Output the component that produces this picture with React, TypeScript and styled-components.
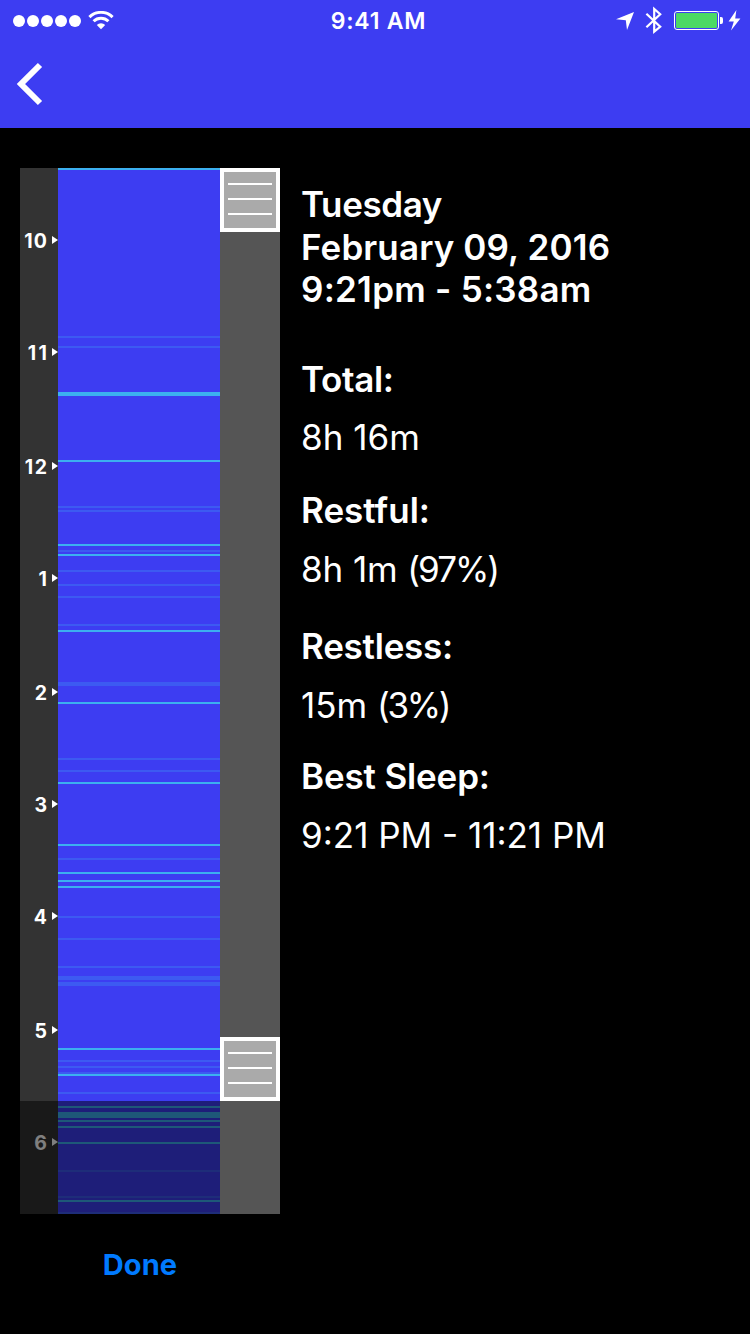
import React from "react";
import styled, { createGlobalStyle } from "styled-components";

const blue = "#3d3df2";
const bright = "#3cb0f0";
const dim = "#3d5af2";

const GlobalStyle = createGlobalStyle`
  *, *::before, *::after { box-sizing: border-box; }
  html, body { margin: 0; background: #000; }
  body {
    font-family: Inter, "Liberation Sans", sans-serif;
    color: #fff;
    overflow: hidden;
    -webkit-font-smoothing: antialiased;
  }
`;

const Screen = styled.div`
  width: 750px;
  height: 1334px;
  display: flex;
  flex-direction: column;
  background: #000;
`;

const Header = styled.header`
  height: 128px;
  background: ${blue};
  display: flex;
  flex-direction: column;
`;

const StatusBar = styled.div`
  height: 40px;
  display: grid;
  grid-template-columns: 1fr auto 1fr;
  align-items: center;
`;

const StatusLeft = styled.div`
  display: flex;
  align-items: center;
  gap: 7px;
  padding: 1px 0 0 13px;
`;

const Signal = styled.div`
  display: flex;
  gap: 2px;
`;

const Dot = styled.span`
  width: 12px;
  height: 12px;
  border-radius: 50%;
  background: #fff;
`;

const Clock = styled.time`
  font-size: 23px;
  line-height: 38px;
  font-weight: 600;
  letter-spacing: 0.8px;
  padding: 2px 0 0 7px;
`;

const StatusRight = styled.div`
  display: flex;
  justify-content: flex-end;
  padding-right: 8px;
`;

const NavBar = styled.nav`
  flex: 1;
  padding: 22px 0 0 16px;
`;

const BackButton = styled.button`
  display: block;
  padding: 0;
  border: 0;
  background: none;
  color: #fff;
  svg { display: block; }
`;

const Content = styled.main`
  display: flex;
  gap: 21px;
  padding: 40px 20px 0;
`;

const Timeline = styled.section`
  width: 260px;
  display: flex;
  flex-direction: column;
`;

const Track = styled.div`
  height: 1046px;
  display: flex;
`;

const Recording = styled.div`
  position: relative;
  width: 200px;
  display: flex;
`;

const HourScale = styled.div`
  width: 38px;
  background: #333;
  padding-top: 60px;
`;

const Hour = styled.div<{ $height: number; $tracking: number }>`
  height: ${(p) => p.$height}px;
  display: flex;
  align-items: flex-start;
  justify-content: flex-end;
  gap: ${(p) => 5 - p.$tracking}px;
  font-size: 19.5px;
  line-height: 26px;
  font-weight: 700;
  letter-spacing: ${(p) => p.$tracking}px;
  svg { display: block; margin-top: 8px; }
`;

const Trimmed = styled.div`
  position: absolute;
  inset: 933px 0 0;
  background: rgba(0, 0, 0, 0.5);
`;

const Slider = styled.div`
  width: 60px;
  background: #555;
  display: flex;
  flex-direction: column;
  justify-content: space-between;
  padding-bottom: 113px;
`;

const Handle = styled.div`
  height: 64px;
  border: 4px solid #fff;
  background: #aaa;
  padding: 11px 4px 0;
  display: flex;
  flex-direction: column;
  gap: 13px;
`;

const Grip = styled.span`
  height: 2px;
  background: #fff;
`;

const DoneButton = styled.button`
  width: 240px;
  margin-top: 31px;
  padding: 0;
  border: 0;
  background: none;
  color: #007aff;
  font: 700 29px/40px Inter, "Liberation Sans", sans-serif;
  letter-spacing: 0.1px;
`;

const Details = styled.section`
  padding-top: 15px;
  font-size: 35px;
  white-space: nowrap;
`;

const Night = styled.h1`
  margin: 0 0 47.5px;
  font-size: inherit;
  font-weight: 600;
  line-height: 42.5px;
`;

const Line = styled.span<{ $tracking?: number }>`
  display: block;
  letter-spacing: ${(p) => p.$tracking ?? 0}px;
`;

const Share = styled.span<{ $tracking?: number }>`
  letter-spacing: ${(p) => p.$tracking ?? 0}px;
`;

const Stat = styled.div<{ $gap: number; $after: number }>`
  display: flex;
  flex-direction: column;
  gap: ${(p) => p.$gap}px;
  margin-bottom: ${(p) => p.$after}px;
`;

const StatName = styled.h2`
  margin: 0;
  font-size: inherit;
  font-weight: 600;
  line-height: 42px;
`;

const StatValue = styled.p`
  margin: 0;
  font-weight: 400;
  line-height: 42px;
`;

const hours: [string, number, number][] = [
  ["10", 112, 1.3], ["11", 114, 2.5], ["12", 112, 1.5], ["1", 114, 0], ["2", 112, 0],
  ["3", 112, 0], ["4", 114, 0], ["5", 112, 0], ["6", 26, 0],
];

// Offset from the top of the graph and thickness of each movement line.
const restless: [number, number][] = [
  [0, 2], [224, 4], [292, 2], [376, 2], [386, 2], [462, 2], [534, 2], [614, 2],
  [676, 2], [704, 2], [712, 2], [718, 2], [880, 2], [906, 2], [938, 2], [944, 6],
  [952, 2], [958, 2], [974, 2], [1032, 2],
];
const light: [number, number][] = [
  [168, 2], [178, 2], [338, 2], [342, 2], [382, 2], [402, 2], [416, 2], [428, 2],
  [456, 2], [514, 4], [590, 2], [602, 2], [690, 2], [748, 2], [770, 2], [798, 2],
  [808, 4], [814, 4], [892, 2], [898, 2], [904, 2], [924, 2], [1002, 2], [1028, 2],
  [1044, 2],
];

const stats = [
  { name: "Total:", value: "8h 16m", gap: 16, after: 31, nt: -0.35, vt: 0 },
  { name: "Restful:", value: "8h 1m ", share: "(97%)", st: -2, gap: 17, after: 35, nt: 0, vt: -0.1 },
  { name: "Restless:", value: "15m ", share: "(3%)", st: -2.3, gap: 17, after: 29, nt: -0.25, vt: 0 },
  { name: "Best Sleep:", value: "9:21 PM - 11:21 PM", gap: 17, after: 0, nt: -0.15, vt: 0 },
];

const WifiIcon = () => (
  <svg width="26" height="19" viewBox="0 0 26 19" fill="none" stroke="#fff">
    <path d="M1.4 6.1a16.6 16.6 0 0 1 23.2 0" strokeWidth="3" />
    <path d="M5.6 10.3a10.6 10.6 0 0 1 14.8 0" strokeWidth="3" />
    <path d="M13 18.2 8.8 14a6 6 0 0 1 8.4 0Z" fill="#fff" stroke="none" />
  </svg>
);

const StatusIcons = () => (
  <svg width="126" height="40" viewBox="616 0 126 40">
    <path d="M634 12 627 30 625.8 20.3 616 19.2Z" fill="#fff" />
    <path d="M646.4 13.8 660.2 26.8 654.2 31.6V9L660.2 14.2 646.4 27.2" fill="none" stroke="#fff" strokeWidth="2.2" />
    <rect x="674.5" y="11.5" width="44" height="18" rx="2.5" fill="none" stroke="#fff" />
    <rect x="676" y="13" width="41" height="15" rx="1" fill="#4cd964" />
    <path d="M720 17h1.2q1.8 0 1.8 2v3q0 2-1.8 2H720Z" fill="#fff" />
    <path d="M736.4 10 728.6 21.4h5.2L731 30.4 740.4 18.5h-5.2Z" fill="#fff" />
  </svg>
);

const SleepGraph = () => (
  <svg width="162" height="1046" viewBox="0 0 162 1046" shapeRendering="crispEdges">
    <rect width="162" height="1046" fill={blue} />
    {light.map(([y, h]) => <rect key={y} y={y} width="162" height={h} fill={dim} />)}
    {restless.map(([y, h]) => <rect key={y} y={y} width="162" height={h} fill={bright} />)}
  </svg>
);

const TrimHandle = () => (
  <Handle><Grip /><Grip /><Grip /></Handle>
);

export default function App() {
  return (
    <Screen>
      <GlobalStyle />
      <Header>
        <StatusBar>
          <StatusLeft>
            <Signal><Dot /><Dot /><Dot /><Dot /><Dot /></Signal>
            <WifiIcon />
          </StatusLeft>
          <Clock>9:41 AM</Clock>
          <StatusRight><StatusIcons /></StatusRight>
        </StatusBar>
        <NavBar>
          <BackButton aria-label="Back">
            <svg width="28" height="44" viewBox="0 0 28 44" fill="none" stroke="currentColor" strokeWidth="6">
              <path d="M24 3 5 22 24 41" />
            </svg>
          </BackButton>
        </NavBar>
      </Header>
      <Content>
        <Timeline>
          <Track>
            <Recording>
              <HourScale>
                {hours.map(([label, height, tracking]) => (
                  <Hour key={label} $height={height} $tracking={tracking}>
                    {label}
                    <svg width="6" height="8" viewBox="0 0 6 8"><path d="M0 0 6 4 0 8Z" fill="#fff" /></svg>
                  </Hour>
                ))}
              </HourScale>
              <SleepGraph />
              <Trimmed />
            </Recording>
            <Slider><TrimHandle /><TrimHandle /></Slider>
          </Track>
          <DoneButton>Done</DoneButton>
        </Timeline>
        <Details>
          <Night>
            <Line $tracking={-0.4}>Tuesday</Line>
            <Line $tracking={0.12}>February 09, 2016</Line>
            <Line $tracking={0.25}>9:21pm - 5:38am</Line>
          </Night>
          {stats.map((s) => (
            <Stat key={s.name} $gap={s.gap} $after={s.after}>
              <StatName><Line $tracking={s.nt}>{s.name}</Line></StatName>
              <StatValue>
                <Line $tracking={s.vt}>
                  {s.value}
                  {s.share && <Share $tracking={s.st}>{s.share}</Share>}
                </Line>
              </StatValue>
            </Stat>
          ))}
        </Details>
      </Content>
    </Screen>
  );
}
